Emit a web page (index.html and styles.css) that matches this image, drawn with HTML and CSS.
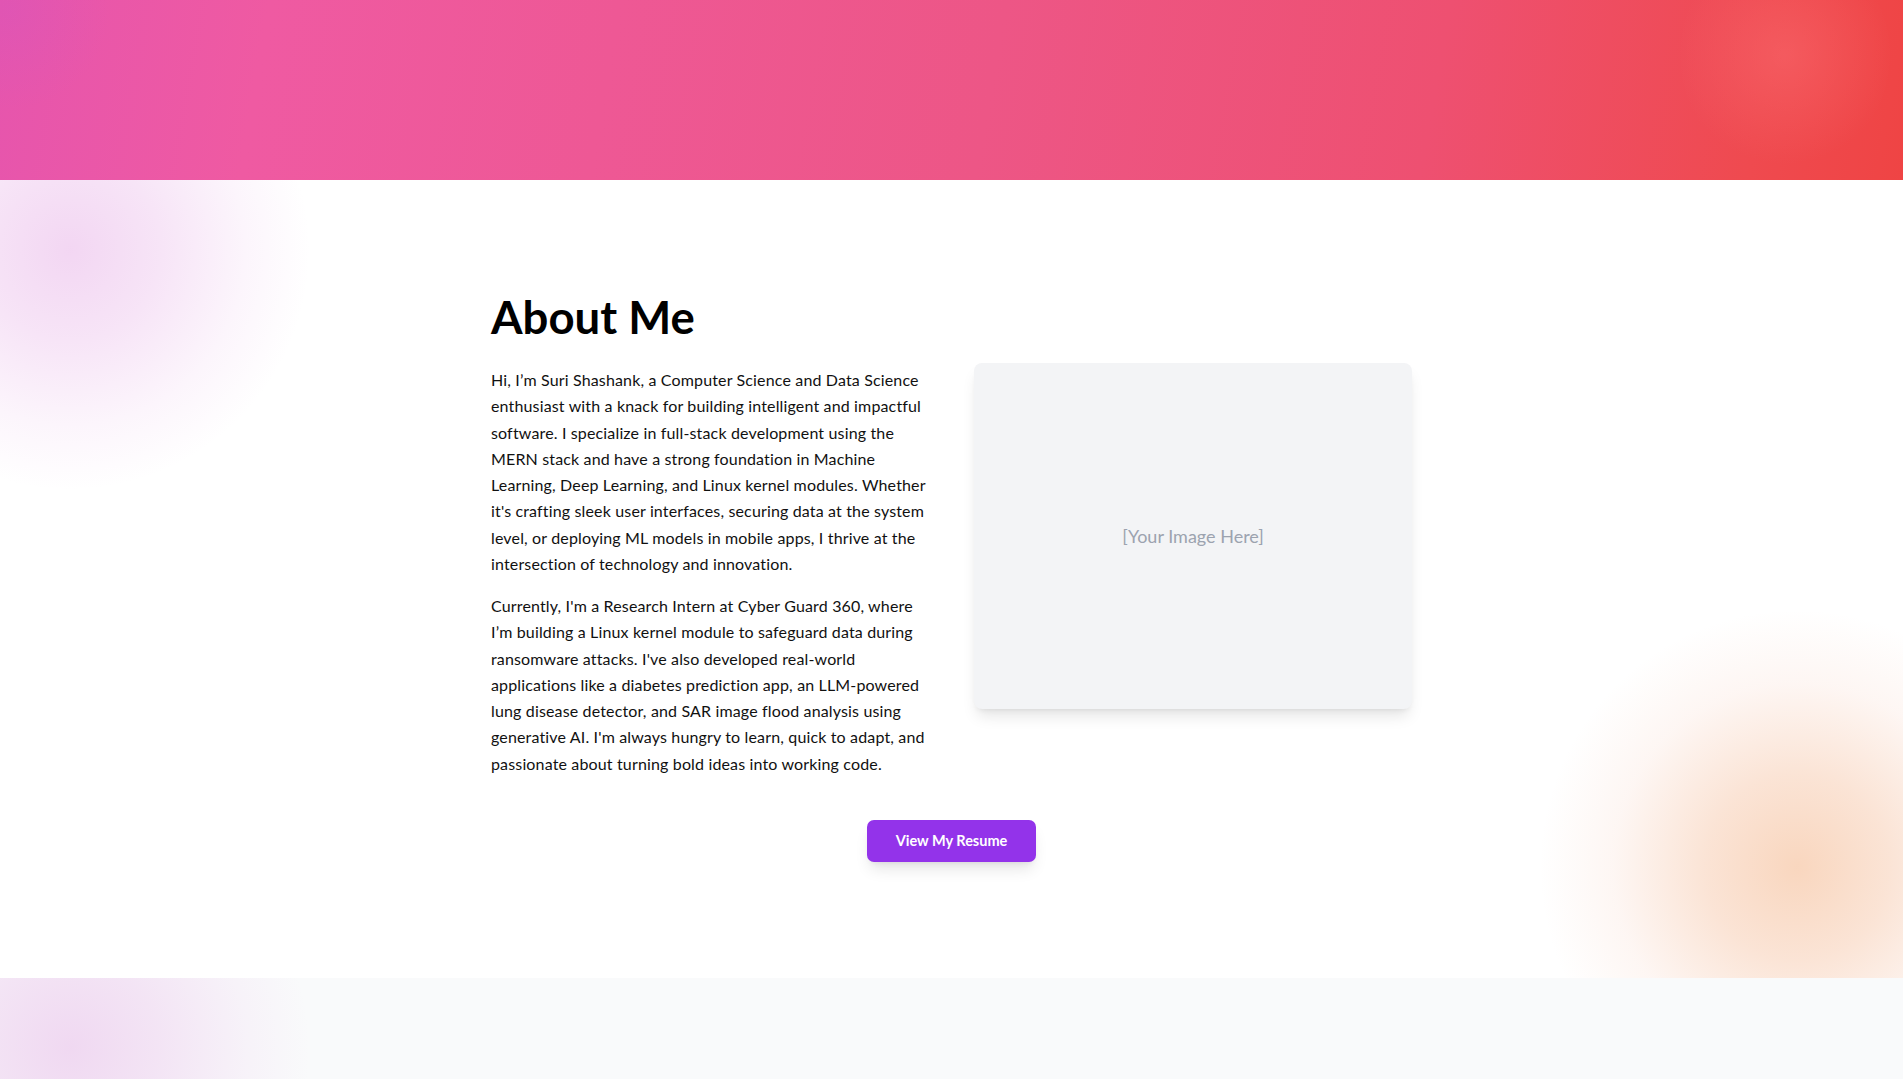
FILE: index.html
```html
<!DOCTYPE html>
<html lang="en">
<head>
<meta charset="utf-8">
<title>About Me</title>
<link rel="stylesheet" href="styles.css">
</head>
<body>
<header class="hero">
  <span class="hero-glow hero-glow-left"></span>
  <span class="hero-glow hero-glow-right"></span>
</header>

<section class="about">
  <span class="blob blob-purple"></span>
  <span class="blob blob-orange"></span>
  <div class="about-inner">
    <h2 class="about-title">About Me</h2>
    <div class="about-grid">
      <div class="about-text">
        <p>Hi, I’m Suri Shashank, a Computer Science and Data Science enthusiast with a knack for building intelligent and impactful software. I specialize in full-stack development using the MERN stack and have a strong foundation in Machine Learning, Deep Learning, and Linux kernel modules. Whether it's crafting sleek user interfaces, securing data at the system level, or deploying ML models in mobile apps, I thrive at the intersection of technology and innovation.</p>
        <p>Currently, I'm a Research Intern at Cyber Guard 360, where I’m building a Linux kernel module to safeguard data during ransomware attacks. I've also developed real-world applications like a diabetes prediction app, an LLM-powered lung disease detector, and SAR image flood analysis using generative AI. I'm always hungry to learn, quick to adapt, and passionate about turning bold ideas into working code.</p>
      </div>
      <div class="about-image">[Your Image Here]</div>
    </div>
    <div class="about-actions">
      <a class="btn" href="#">View My Resume</a>
    </div>
  </div>
</section>

<section class="next">
  <span class="blob blob-purple-2"></span>
</section>
</body>
</html>
```

FILE: styles.css
```css
html, body {
  margin: 0;
  padding: 0;
  overflow: hidden;
}

body {
  font-family: Lato, "Open Sans", "Liberation Sans", sans-serif;
  color: #111;
  background: #fff;
}

.hero {
  position: relative;
  height: 180px;
  overflow: hidden;
  background: linear-gradient(100deg, #e655ad 0%, #ef5aa2 14%, #ee5895 32%, #ed5686 52%, #ee5071 75%, #ef4a4f 92%, #ef4444 100%);
}

.hero-glow {
  position: absolute;
  border-radius: 50%;
}

.hero-glow-left {
  left: -90px;
  top: -90px;
  width: 200px;
  height: 200px;
  background: radial-gradient(circle, rgba(205, 85, 200, 0.25) 0%, rgba(205, 85, 200, 0) 70%);
}

.hero-glow-right {
  left: 1680px;
  top: -60px;
  width: 210px;
  height: 230px;
  background: radial-gradient(circle, rgba(255, 125, 130, 0.32) 0%, rgba(255, 125, 130, 0) 70%);
}

.about {
  position: relative;
  overflow: hidden;
  background: #fff;
  padding: 113px 0 116px;
}

.blob {
  position: absolute;
  border-radius: 50%;
  pointer-events: none;
}

.blob-purple {
  left: -180px;
  top: -180px;
  width: 500px;
  height: 500px;
  background: radial-gradient(circle, rgba(214, 120, 214, 0.30) 0%, rgba(214, 120, 214, 0.2) 25%, rgba(214, 120, 214, 0.07) 50%, rgba(214, 120, 214, 0) 68%);
}

.blob-orange {
  left: 1537px;
  top: 427px;
  width: 520px;
  height: 520px;
  background: radial-gradient(circle, rgba(242, 170, 120, 0.48) 0%, rgba(242, 170, 125, 0.32) 25%, rgba(242, 170, 140, 0.1) 50%, rgba(242, 170, 140, 0) 70%);
}

.about-inner {
  position: relative;
  width: 921px;
  margin: 0 auto;
}

.about-title {
  margin: 0 0 22px;
  font-size: 45.5px;
  line-height: 48px;
  font-weight: 700;
  color: #000;
}

.about-grid {
  display: grid;
  grid-template-columns: 435px 438px;
  gap: 48px;
  align-items: start;
}

.about-text {
  padding-top: 4px;
}

.about-text p {
  margin: 0 0 16px;
  font-size: 16px;
  letter-spacing: 0.15px;
  line-height: 26.25px;
  color: #111;
}

.about-text p:last-child {
  margin-bottom: 0;
}

.about-image {
  height: 346px;
  background: #f3f4f6;
  border-radius: 8px;
  box-shadow: 0 10px 15px -3px rgba(0, 0, 0, 0.1), 0 4px 6px -4px rgba(0, 0, 0, 0.1);
  display: flex;
  align-items: center;
  justify-content: center;
  color: #9ca3af;
  font-size: 18px;
}

.about-actions {
  display: flex;
  justify-content: center;
  margin-top: 43px;
}

.btn {
  display: inline-block;
  background: #9333ea;
  color: #fff;
  font-size: 14.5px;
  font-weight: 700;
  line-height: 42px;
  padding: 0 29px;
  border-radius: 7px;
  text-decoration: none;
  box-shadow: 0 10px 15px -3px rgba(0, 0, 0, 0.1), 0 4px 6px -4px rgba(0, 0, 0, 0.1);
}

.next {
  position: relative;
  overflow: hidden;
  height: 101px;
  background: #f9fafb;
}

.blob-purple-2 {
  left: -180px;
  top: -180px;
  width: 500px;
  height: 500px;
  background: radial-gradient(circle, rgba(214, 120, 214, 0.26) 0%, rgba(214, 120, 214, 0.17) 25%, rgba(214, 120, 214, 0.06) 50%, rgba(214, 120, 214, 0) 68%);
}
```
